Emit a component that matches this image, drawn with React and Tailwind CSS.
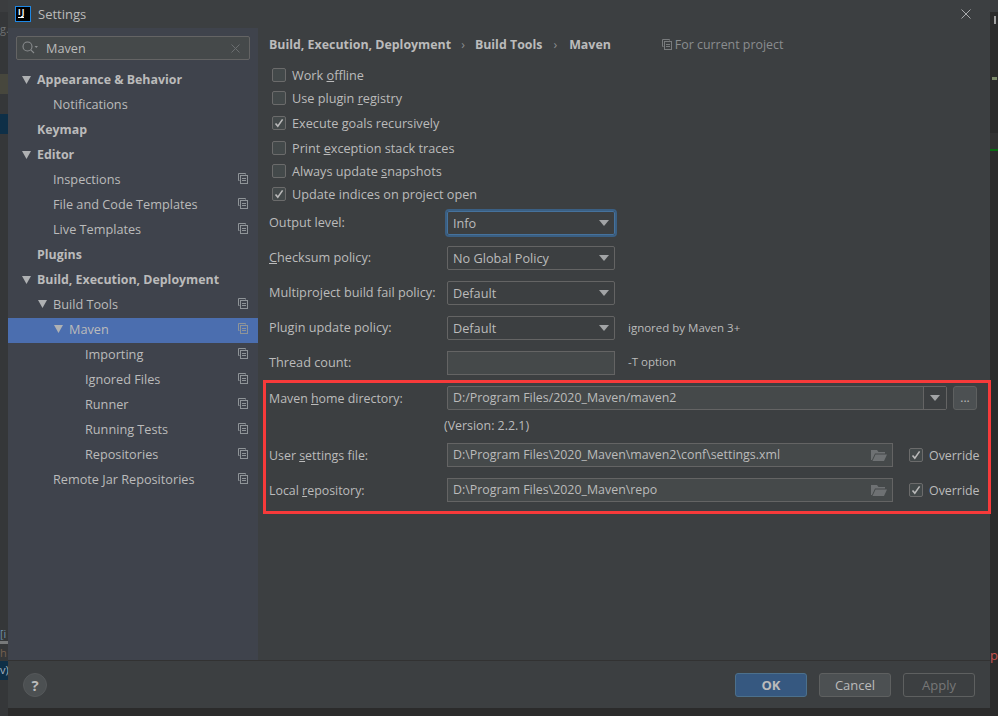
const treeItems = [
  { label: 'Appearance & Behavior', pad: 'pl-[14px]', arrow: true, bold: true },
  { label: 'Notifications', pad: 'pl-[45px]' },
  { label: 'Keymap', pad: 'pl-[29px]', bold: true },
  { label: 'Editor', pad: 'pl-[14px]', arrow: true, bold: true },
  { label: 'Inspections', pad: 'pl-[45px]', copy: true },
  { label: 'File and Code Templates', pad: 'pl-[45px]', copy: true },
  { label: 'Live Templates', pad: 'pl-[45px]', copy: true },
  { label: 'Plugins', pad: 'pl-[29px]', bold: true },
  { label: 'Build, Execution, Deployment', pad: 'pl-[14px]', arrow: true, bold: true },
  { label: 'Build Tools', pad: 'pl-[30px]', arrow: true, copy: true },
  { label: 'Maven', pad: 'pl-[46px]', arrow: true, copy: true, selected: true },
  { label: 'Importing', pad: 'pl-[77px]', copy: true },
  { label: 'Ignored Files', pad: 'pl-[77px]', copy: true },
  { label: 'Runner', pad: 'pl-[77px]', copy: true },
  { label: 'Running Tests', pad: 'pl-[77px]', copy: true },
  { label: 'Repositories', pad: 'pl-[77px]', copy: true },
  { label: 'Remote Jar Repositories', pad: 'pl-[45px]', copy: true },
];

function Triangle({ className = '' }) {
  return (
    <svg width="9" height="8" viewBox="0 0 9 8" className={className}>
      <path d="M0 0h9L4.5 8z" fill="#afb1b3" />
    </svg>
  );
}

function ComboArrow() {
  return (
    <svg width="10" height="6" viewBox="0 0 10 6" className="shrink-0">
      <path d="M0 0h10L5 6z" fill="#a2a4a6" />
    </svg>
  );
}

function CopyIcon() {
  return (
    <svg width="10" height="11" viewBox="0 0 10 11" fill="none" stroke="#8f9498" className="mr-[10px] shrink-0">
      <path d="M7.5 1.5v-1h-7v7h1" />
      <rect x="2.5" y="2.5" width="7" height="8" />
      <path d="M4 5.5h4M4 7.5h4" />
    </svg>
  );
}

function TreeRow({ item }) {
  return (
    <div
      className={`flex h-[25px] items-center ${item.bold ? 'pb-[2px]' : 'pb-[4px]'} ${item.pad} ${
        item.selected ? 'bg-[#4b6eaf]' : ''
      }`}
    >
      {item.arrow && <Triangle className="mr-[6px] shrink-0" />}
      <span className={item.bold ? 'text-[12.4px] font-bold' : ''}>{item.label}</span>
      {item.copy && <span className="flex-1" />}
      {item.copy && <CopyIcon />}
    </div>
  );
}

function Checkbox({ checked }) {
  return (
    <span className="flex h-[14px] w-[14px] shrink-0 items-center justify-center rounded-[2px] border border-[#6b6b6b] bg-[#43494a]">
      {checked && (
        <svg width="10" height="10" viewBox="0 0 10 10" fill="none" stroke="#b9b9b9" strokeWidth="1.6">
          <path d="M1.5 5.5l2.3 2.6L8.6 1.4" />
        </svg>
      )}
    </span>
  );
}

function CheckRow({ checked, className = '', children }) {
  return (
    <div className={`flex h-[20px] items-center gap-[6px] pl-[14px] ${className}`}>
      <Checkbox checked={checked} />
      <span>{children}</span>
    </div>
  );
}

function Select({ value, focused }) {
  return (
    <div
      className={`flex h-[24px] w-[168px] items-center justify-between rounded-[2px] border bg-[#3c3f41] pl-[5px] pr-[5px] ${
        focused ? 'border-[#46729c] outline-2 outline-[#3a5f83]' : 'border-[#646464]'
      }`}
    >
      <span>{value}</span>
      <ComboArrow />
    </div>
  );
}

function FormRow({ label, labelClass = '', className = '', children }) {
  return (
    <div className={`flex items-center ${className}`}>
      <span className={`w-[178px] shrink-0 ${labelClass}`}>{label}</span>
      {children}
    </div>
  );
}

function FolderIcon() {
  return (
    <svg width="16" height="12" viewBox="0 0 16 12" className="shrink-0">
      <path d="M0 1h6l1.5 2H14v1.5H4L1 11H0z" fill="#6e7173" />
      <path d="M4.5 5.5H16L13 12H1.5z" fill="#6e7173" />
    </svg>
  );
}

function PathField({ value }) {
  return (
    <div className="flex h-[24px] w-[446px] items-center justify-between border border-[#646464] bg-[#45494a] pl-[5px] pr-[5px]">
      <span>{value}</span>
      <FolderIcon />
    </div>
  );
}

function Override() {
  return (
    <div className="ml-[16px] flex items-center gap-[6px]">
      <Checkbox checked />
      <span className="pt-[2px]">Override</span>
    </div>
  );
}

function DialogButton({ className, children }) {
  return (
    <button className={`h-[24px] w-[72px] rounded-[3px] border text-[13px] ${className}`}>{children}</button>
  );
}

function App() {
  return (
    <div className="flex h-[716px] w-[998px] overflow-hidden bg-[#2b2b2b] font-['Open_Sans',sans-serif] text-[12.7px] leading-[18px] text-[#bbbbbb]">
      {/* editor peeking out on the left */}
      <div className="flex w-[8px] shrink-0 flex-col overflow-hidden bg-[#353739] text-[11px] text-[#6f7173]">
        <div className="h-[12px] bg-[#3b3d3f]" />
        <div className="h-[62px] pt-[8px]">g.</div>
        <div className="h-[20px] bg-[#47473d]" />
        <div className="h-[20px]" />
        <div className="h-[20px] bg-[#0e2f47]" />
        <div className="h-[491px]" />
        <div className="h-[16px] text-[#6c8fa8]">[i</div>
        <div className="h-[3px] bg-[#77797a]" />
        <div className="h-[17px] text-[#75604f]">h</div>
        <div className="h-[19px] bg-[#0e2f47] text-[#a8b4c0]">v)</div>
        <div className="flex-1" />
      </div>

      <div className="flex h-[708px] w-[982px] shrink-0 flex-col bg-[#3c3f41]">
        <header className="flex h-[28px] shrink-0 items-center pl-[7px] pr-[19px]">
          <div className="flex h-[16px] w-[16px] flex-col border border-[#1e88e5] bg-black pl-[2px] pt-[1px]">
            <span className="text-[8px] font-bold leading-[8px] tracking-[1px] text-white">IJ</span>
            <span className="mt-[1px] h-[1px] w-[6px] bg-white" />
          </div>
          <span className="ml-[7px] flex-1 text-[13px]">Settings</span>
          <svg width="10" height="10" viewBox="0 0 10 10" stroke="#a9abad" fill="none">
            <path d="M.5.5l9 9M9.5.5l-9 9" />
          </svg>
        </header>

        <div className="flex min-h-0 flex-1">
          <aside className="w-[250px] shrink-0 bg-[#3f434c]">
            <div className="mx-[8px] mt-[8px] flex h-[24px] items-center rounded-[2px] border border-[#646464] bg-[#45494a] pl-[5px] pr-[9px]">
              <svg width="16" height="14" viewBox="0 0 16 14" fill="none" stroke="#8a8d8f" strokeWidth="1.1" className="shrink-0">
                <circle cx="5.5" cy="5.5" r="4.5" />
                <path d="M8.8 8.8L12 12" />
                <path d="M12.5 5h3.5l-1.75 2z" fill="#8a8d8f" stroke="none" />
              </svg>
              <span className="ml-[8px] flex-1">Maven</span>
              <svg width="9" height="9" viewBox="0 0 9 9" stroke="#6b6e70" fill="none">
                <path d="M.5.5l8 8M8.5.5l-8 8" />
              </svg>
            </div>
            <div className="mt-[8px]">
              {treeItems.map((item) => (
                <TreeRow key={item.label} item={item} />
              ))}
            </div>
          </aside>

          <main className="min-w-0 flex-1">
            <div className="mb-[4px] flex h-[33px] items-center pl-[11px] text-[12.4px] font-bold">
              <span>Build, Execution, Deployment</span>
              <span className="mx-[10px] font-normal text-[#8a8d8f]">›</span>
              <span>Build Tools</span>
              <span className="ml-[11px] mr-[12px] font-normal text-[#8a8d8f]">›</span>
              <span>Maven</span>
              <svg width="10" height="11" viewBox="0 0 10 11" fill="none" stroke="#787b7d" className="ml-[51px] mr-[3px]">
                <path d="M7.5 1.5v-1h-7v7h1" />
                <rect x="2.5" y="2.5" width="7" height="8" />
                <path d="M4 5.5h4M4 7.5h4" />
              </svg>
              <span className="font-normal text-[#8a8d8f]">For current project</span>
            </div>

            <CheckRow>Work <u>o</u>ffline</CheckRow>
            <CheckRow className="mt-[3px]">Use plugin <u>r</u>egistry</CheckRow>
            <CheckRow checked className="mt-[5px]">Execute <u>g</u>oals recursively</CheckRow>
            <CheckRow className="mt-[5px]">Print <u>e</u>xception stack traces</CheckRow>
            <CheckRow className="mt-[3px]">Always update <u>s</u>napshots</CheckRow>
            <CheckRow checked className="mt-[3px]">Update indices on project open</CheckRow>

            <div className="mt-[7px] flex flex-col gap-[11px] pl-[11px]">
              <FormRow label="Output level:" labelClass="pb-[2px]">
                <Select value="Info" focused />
              </FormRow>
              <FormRow label={<><u>C</u>hecksum policy:</>} labelClass="pb-[2px]">
                <Select value="No Global Policy" />
              </FormRow>
              <FormRow label="Multiproject build fail policy:" labelClass="pb-[2px]">
                <Select value="Default" />
              </FormRow>
              <FormRow label="Plugin update policy:" labelClass="pb-[2px]">
                <Select value="Default" />
                <span className="ml-[13px] text-[11.5px]">ignored by Maven 3+</span>
              </FormRow>
              <FormRow label="Thread count:" labelClass="pb-[2px]">
                <div className="h-[24px] w-[168px] border border-[#646464] bg-[#45494a]" />
                <span className="ml-[13px] pb-[2px] text-[11.5px]">-T option</span>
              </FormRow>
            </div>

            {/* red annotation round the maven paths */}
            <section className="ml-[5px] mt-[5px] w-[728px] border-[3px] border-[#f73a3a] pb-[9px] pl-[3px] pt-[3px] text-[12.4px]">
              <FormRow label={<>Maven <u>h</u>ome directory:</>} labelClass="pt-[2px]">
                <div className="flex h-[24px] w-[500px] items-center rounded-[2px] border border-[#646464] bg-[#45494a]">
                  <span className="flex-1 pl-[5px]">D:/Program Files/2020_Maven/maven2</span>
                  <div className="flex h-full w-[23px] items-center justify-center border-l border-[#646464] bg-[#3c3f41]">
                    <ComboArrow />
                  </div>
                </div>
                <button className="ml-[6px] h-[24px] w-[24px] rounded-[3px] border border-[#5e6060] bg-[#4c5052] text-[12px] leading-[18px]">
                  ...
                </button>
              </FormRow>
              <div className="mt-[6px] flex h-[20px] items-center pl-[175px]">(Version: 2.2.1)</div>
              <FormRow label={<>User <u>s</u>ettings file:</>} labelClass="pt-[2px]" className="mt-[7px]">
                <PathField value="D:\Program Files\2020_Maven\maven2\conf\settings.xml" />
                <Override />
              </FormRow>
              <FormRow label={<>Local <u>r</u>epository:</>} labelClass="pt-[2px]" className="mt-[11px]">
                <PathField value="D:\Program Files\2020_Maven\repo" />
                <Override />
              </FormRow>
            </section>
          </main>
        </div>

        <footer className="flex h-[48px] shrink-0 items-start border-t border-[#323232] pl-[15px] pr-[15px] pt-[12px]">
          <div className="flex h-[24px] w-[24px] items-center justify-center rounded-full border border-[#55585a] bg-[#4c5052] text-[15px] font-bold">
            ?
          </div>
          <div className="flex-1" />
          <div className="flex gap-[12px]">
            <DialogButton className="border-[#4c708c] bg-[#365880] font-bold">OK</DialogButton>
            <DialogButton className="border-[#5e6060] bg-[#4c5052]">Cancel</DialogButton>
            <DialogButton className="border-[#5e6060] bg-[#3c3f41] text-[#777777]">Apply</DialogButton>
          </div>
        </footer>
      </div>

      {/* editor peeking out on the right */}
      <div className="flex w-[8px] shrink-0 flex-col overflow-hidden text-[13px] text-[#c75450]">
        <div className="h-[12px] bg-[#3b3d3f]" />
        <div className="h-[4px]" />
        <div className="ml-[4px] h-[8px] w-[2px] bg-[#a0a0a0]" />
        <div className="h-[53px]" />
        <div className="ml-[2px] h-[3px] w-[5px] bg-[#7d8a6a]" />
        <div className="h-[53px]" />
        <div className="h-[16px] bg-[#323232]" />
        <div className="h-[2px] bg-[#0a6a12]" />
        <div className="h-[496px]" />
        <div className="h-[16px] leading-[16px]">p</div>
      </div>
    </div>
  );
}

export default App;
